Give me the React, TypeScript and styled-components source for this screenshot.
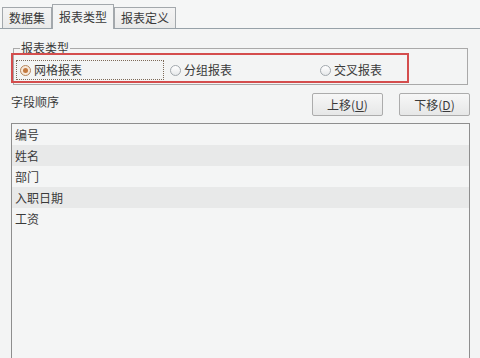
import styled, { createGlobalStyle } from "styled-components";

const tabs = ["数据集", "报表类型", "报表定义"];
const reportTypes = ["网格报表", "分组报表", "交叉报表"];
const fields = ["编号", "姓名", "部门", "入职日期", "工资"];

const App = () => {
  return (
    <>
      <GlobalStyle />
      <Window>
        <TabBar>
          {tabs.map((tab, i) => (
            <Tab key={tab} $active={i === 1}>
              {tab}
            </Tab>
          ))}
        </TabBar>

        <Panel>
          <Group>
            <Legend>报表类型</Legend>
            <RadioRow>
              {reportTypes.map((type, i) => (
                <RadioItem key={type} $focused={i === 0}>
                  <RadioMark $checked={i === 0} />
                  {type}
                </RadioItem>
              ))}
            </RadioRow>
          </Group>
          <Highlight />

          <OrderHeader>
            <OrderLabel>字段顺序</OrderLabel>
            <Button type="button">
              上移(<u>U</u>)
            </Button>
            <Button type="button">
              下移(<u>D</u>)
            </Button>
          </OrderHeader>

          <FieldList>
            {fields.map((field, i) => (
              <FieldRow key={field} $shaded={i % 2 === 1}>
                {field}
              </FieldRow>
            ))}
          </FieldList>
        </Panel>
      </Window>
    </>
  );
};

const GlobalStyle = createGlobalStyle`
  html, body {
    margin: 0;
    padding: 0;
    width: 480px;
    height: 358px;
    overflow: hidden;
    background: #f5f6f6;
  }
  body {
    font-family: "Noto Sans CJK SC", "Noto Sans", sans-serif;
    font-size: 12px;
    color: #3a3a3a;
  }
`;

const Window = styled.div`
  width: 480px;
  height: 358px;
  overflow: hidden;
  display: flex;
  flex-direction: column;
`;

const TabBar = styled.div`
  display: flex;
  align-items: flex-end;
  box-sizing: border-box;
  height: 29px;
  padding-left: 2px;
  border-bottom: 1px solid #97a1a8;
`;

type TTabProps = { $active?: boolean };

const Tab = styled.div<TTabProps>`
  position: relative;
  box-sizing: border-box;
  height: ${({ $active }) => ($active ? "25px" : "21px")};
  margin-bottom: ${({ $active }) => ($active ? "-1px" : "0")};
  padding: ${({ $active }) => ($active ? "2px 6px 0" : "0 6px")};
  line-height: 20px;
  border: 1px solid #a3a8ac;
  border-bottom: none;
  background: ${({ $active }) =>
    $active ? "#f3f4f4" : "linear-gradient(#f4f4f4, #e9eaea)"};
  white-space: nowrap;
`;

const Panel = styled.div`
  position: relative;
  flex: 1;
  min-height: 0;
  background: #f3f4f4;
  padding-top: 12px;
  display: flex;
  flex-direction: column;
`;

const Group = styled.fieldset`
  margin: 0 12px 0 13px;
  padding: 0;
  min-inline-size: 0;
  border: 1px solid #a9a9a9;
`;

const Legend = styled.legend`
  margin-left: 6px;
  padding: 0 1px;
  line-height: 14px;
  font-size: 12px;
`;

const RadioRow = styled.div`
  display: flex;
  gap: 2px;
  padding: 5px 0 4px 2px;
`;

type TRadioItemProps = { $focused?: boolean };

const RadioItem = styled.div<TRadioItemProps>`
  box-sizing: border-box;
  width: 148px;
  height: 20px;
  display: flex;
  align-items: center;
  gap: 3px;
  padding-left: 3px;
  border: 1px dotted ${({ $focused }) => ($focused ? "#7d6a58" : "transparent")};
  line-height: 18px;
`;

type TRadioMarkProps = { $checked?: boolean };

const RadioMark = styled.span<TRadioMarkProps>`
  box-sizing: border-box;
  width: 11px;
  height: 11px;
  border-radius: 50%;
  flex-shrink: 0;
  display: flex;
  align-items: center;
  justify-content: center;
  border: 1px solid ${({ $checked }) => ($checked ? "#b4865c" : "#a2a8ad")};
  background: ${({ $checked }) =>
    $checked ? "#f7e8da" : "linear-gradient(#ffffff, #e6e8ea)"};

  &::after {
    content: "";
    display: ${({ $checked }) => ($checked ? "block" : "none")};
    width: 5px;
    height: 5px;
    border-radius: 50%;
    background: #c47a40;
  }
`;

const Highlight = styled.div`
  position: absolute;
  left: 11px;
  top: 24px;
  width: 398px;
  height: 30px;
  box-sizing: border-box;
  border: 2px solid #d44d4d;
  pointer-events: none;
`;

const OrderHeader = styled.div`
  display: flex;
  align-items: flex-start;
  gap: 16px;
  margin-top: 8px;
  padding: 0 10px 0 11px;
`;

const OrderLabel = styled.div`
  flex: 1;
  margin-top: 2px;
  line-height: 14px;
`;

const Button = styled.button`
  box-sizing: border-box;
  width: 71px;
  height: 23px;
  padding: 0;
  border: 1px solid #acacac;
  border-radius: 2px;
  background: linear-gradient(#f7f7f7, #e6e7e7);
  font-family: inherit;
  font-size: 12px;
  color: #3a3a3a;
  line-height: 20px;

  u {
    text-underline-offset: 1px;
  }
`;

const FieldList = styled.div`
  margin: 7px 10px 0 11px;
  height: 260px;
  flex-shrink: 0;
  border: 1px solid #8e8e8e;
  background: #f4f5f5;
`;

type TFieldRowProps = { $shaded?: boolean };

const FieldRow = styled.div<TFieldRowProps>`
  height: 21px;
  line-height: 21px;
  padding-left: 3px;
  background: ${({ $shaded }) => ($shaded ? "#e8e9e9" : "transparent")};
`;

export default App;
